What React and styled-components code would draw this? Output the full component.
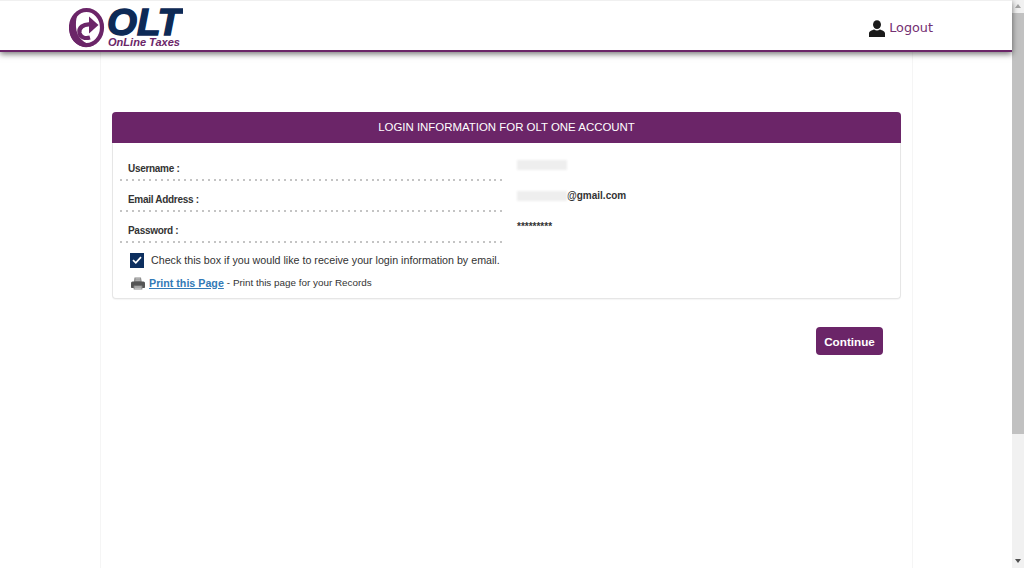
import React, { useState } from "react";
import styled, { createGlobalStyle } from "styled-components";

const PURPLE = "#6b2568";

const GlobalStyle = createGlobalStyle`
  html, body {
    margin: 0;
    height: 100%;
    overflow: hidden;
    background: #fff;
  }
  #root {
    height: 100%;
  }
`;

const Logo = () => (
  <LogoSvg width="114" height="48" viewBox="0 0 114 48">
    {/* ring, heavier on the lower left */}
    <ellipse cx="17.500" cy="25.500" rx="15.500" ry="17.500" fill="none" stroke={PURPLE} strokeWidth="4.200" />
    <path
      d="M6 13 C-2 22 -1 36 8 42 C13 46 20 46 25 43 C15 42.500 7.500 35 7 25 C6.800 20 7 16 9 12 Z"
      fill={PURPLE}
    />
    {/* curled arrow */}
    <path
      d="M22 22.500 C14 21.500 9.500 26 10.500 31 C11.500 35 15.500 37 21 35.500"
      fill="none"
      stroke={PURPLE}
      strokeWidth="4.200"
    />
    <path d="M29.500 23 L20 14.500 L20 31.500 Z" fill={PURPLE} />
    <text
      x="38"
      y="33"
      fontFamily="'Liberation Sans', Arial, sans-serif"
      fontSize="37"
      fontWeight="700"
      fontStyle="italic"
      fill="#0d2a56"
      stroke="#0d2a56"
      strokeWidth="1.400"
      textLength="74"
      lengthAdjust="spacingAndGlyphs"
    >
      OLT
    </text>
    <text
      x="39"
      y="44"
      fontFamily="'Liberation Sans', Arial, sans-serif"
      fontSize="10.500"
      fontWeight="700"
      fontStyle="italic"
      fill={PURPLE}
      textLength="72"
      lengthAdjust="spacingAndGlyphs"
    >
      OnLine Taxes
    </text>
  </LogoSvg>
);

const UserIcon = () => (
  <svg width="16" height="17" viewBox="0 0 16 17">
    <ellipse cx="8" cy="4.600" rx="4" ry="4.400" fill="#1a1a1a" />
    <path
      d="M0 17 V13.600 C0 11.400 2.600 10.400 5.200 9.600 C6.800 10.800 9.200 10.800 10.800 9.600 C13.400 10.400 16 11.400 16 13.600 V17 Z"
      fill="#1a1a1a"
    />
  </svg>
);

const PrinterIcon = () => (
  <svg width="14" height="13" viewBox="0 0 14 13">
    <path d="M3.500 0.500 H10 L10.800 5 H2.800 Z" fill="#8a8a8a" />
    <path d="M4.500 1.800 H9.200 M4.400 3.200 H9.400" stroke="#d8d8d8" strokeWidth="0.700" />
    <path
      d="M1.600 4.600 H12.400 C13.400 4.600 14 5.400 14 6.400 V10 C14 10.600 13.600 11 13 11 H1 C0.400 11 0 10.600 0 10 V6.400 C0 5.400 0.600 4.600 1.600 4.600 Z"
      fill="#555"
    />
    <rect x="2.600" y="8.600" width="8.800" height="4" rx="0.500" fill="#888" />
    <path d="M3.600 10 H10.400 M3.600 11.400 H10.400" stroke="#ddd" strokeWidth="0.700" />
  </svg>
);

const CheckMark = () => (
  <svg width="10" height="8" viewBox="0 0 10 8">
    <path
      d="M1 4.200 L3.800 6.800 L9 1.200"
      fill="none"
      stroke="#fff"
      strokeWidth="1.700"
    />
  </svg>
);

export default function App() {
  const [checked, setChecked] = useState(true);

  const rows = [
    { label: "Username :", value: <Redacted $width={50} /> },
    {
      label: "Email Address :",
      value: (
        <>
          <Redacted $width={50} />
          @gmail.com
        </>
      ),
    },
    { label: "Password :", value: "*********" },
  ];

  return (
    <Screen>
      <GlobalStyle />
      <Page>
        <Header>
          <Logo />
          <LogoutLink href="#">
            <UserIcon />
            Logout
          </LogoutLink>
        </Header>
        <Content>
          <Panel>
            <PanelTitle>LOGIN INFORMATION FOR OLT ONE ACCOUNT</PanelTitle>
            <PanelBody>
              <InfoGrid>
                {rows.map((row) => (
                  <React.Fragment key={row.label}>
                    <InfoLabel>{row.label}</InfoLabel>
                    <InfoValue>{row.value}</InfoValue>
                  </React.Fragment>
                ))}
              </InfoGrid>
              <CheckRow>
                <CheckBox
                  type="button"
                  onClick={() => setChecked(!checked)}
                  aria-label="Email login information"
                >
                  {checked && <CheckMark />}
                </CheckBox>
                Check this box if you would like to receive your login information by email.
              </CheckRow>
              <PrintRow>
                <PrinterIcon />
                <PrintLink href="#">Print this Page</PrintLink>
                <PrintNote>- Print this page for your Records</PrintNote>
              </PrintRow>
            </PanelBody>
          </Panel>
          <Actions>
            <ContinueButton>Continue</ContinueButton>
          </Actions>
        </Content>
      </Page>
      <Scrollbar>
        <ScrollArrow />
        <ScrollThumb />
        <ScrollArrow $down />
      </Scrollbar>
    </Screen>
  );
}

const Screen = styled.div`
  display: flex;
  height: 568px;
  width: 1024px;
  overflow: hidden;
  font-family: "Liberation Sans", Arial, sans-serif;
`;

const Page = styled.div`
  flex: 1;
  min-width: 0;
  display: flex;
  flex-direction: column;
`;

const Header = styled.header`
  position: relative;
  z-index: 1;
  box-sizing: border-box;
  height: 52px;
  display: flex;
  align-items: flex-start;
  justify-content: space-between;
  padding: 1px 79px 0 69px;
  background: #fff;
  border-top: 1px solid #f0f0f0;
  border-bottom: 2px solid ${PURPLE};
  box-shadow: 0 2px 6px rgba(0, 0, 0, 0.55);
`;

const LogoSvg = styled.svg`
  display: block;
`;

const LogoutLink = styled.a`
  display: flex;
  align-items: center;
  gap: 4px;
  margin-top: 16px;
  font-family: "DejaVu Sans", Verdana, sans-serif;
  font-size: 12.800px;
  line-height: 20px;
  color: #743072;
  text-decoration: none;
`;

const Content = styled.main`
  box-sizing: border-box;
  flex: 1;
  width: 813px;
  margin-left: 100px;
  padding: 60px 11px 0;
  border-left: 1px solid #f5f5f5;
  border-right: 1px solid #f5f5f5;
`;

const Panel = styled.section`
  box-sizing: border-box;
  height: 187px;
  border: 1px solid #e6e6e6;
  border-top: 0;
  border-radius: 4px;
  background: #fff;
  box-shadow: 0 1px 1px rgba(0, 0, 0, 0.04);
`;

const PanelTitle = styled.h2`
  margin: 0 -1px;
  height: 31px;
  border-radius: 4px 4px 0 0;
  background: ${PURPLE};
  color: #fff;
  font-size: 11.450px;
  font-weight: 400;
  line-height: 31px;
  text-align: center;
`;

const PanelBody = styled.div`
  padding: 7px 0 0 7px;
`;

const InfoGrid = styled.div`
  display: grid;
  grid-template-columns: 383px 1fr;
  column-gap: 14px;
  grid-auto-rows: 31px;
`;

const InfoLabel = styled.div`
  box-sizing: border-box;
  padding: 12px 0 0 8px;
  background: repeating-linear-gradient(90deg, #c4c4c4 0 2px, transparent 2px 5.850px) left bottom / 100% 2px no-repeat;
  font-size: 10px;
  font-weight: 700;
  letter-spacing: -0.3px;
  line-height: 14px;
  color: #333;
`;

const InfoValue = styled.div`
  display: flex;
  align-items: flex-start;
  padding-top: 8px;
  font-size: 10px;
  font-weight: 700;
  line-height: 14px;
  color: #333;
`;

const Redacted = styled.span`
  display: block;
  width: ${(p) => p.$width}px;
  height: 10px;
  margin-top: 2px;
  background: #eeeeee;
  filter: blur(1px);
`;

const CheckRow = styled.div`
  display: flex;
  align-items: center;
  gap: 7px;
  margin: 9px 0 0 10px;
  font-size: 10.700px;
  line-height: 16px;
  color: #333;
`;

const CheckBox = styled.button`
  display: flex;
  align-items: center;
  justify-content: center;
  width: 14px;
  height: 15px;
  padding: 0;
  border: 0;
  background: #0d2f5f;
  cursor: pointer;
`;

const PrintRow = styled.div`
  display: flex;
  align-items: center;
  gap: 4px;
  margin: 7px 0 0 11px;
  line-height: 16px;
`;

const PrintLink = styled.a`
  font-size: 10.700px;
  font-weight: 700;
  color: #337ab7;
`;

const PrintNote = styled.span`
  margin-left: -1px;
  font-size: 9.900px;
  color: #333;
`;

const Actions = styled.div`
  display: flex;
  justify-content: flex-end;
  padding: 28px 18px 0 0;
`;

const ContinueButton = styled.button`
  width: 67px;
  height: 28px;
  padding: 0;
  border: 0;
  border-radius: 4px;
  background: ${PURPLE};
  color: #fff;
  font-family: "Liberation Sans", Arial, sans-serif;
  font-size: 11.700px;
  font-weight: 700;
  cursor: pointer;
`;

const Scrollbar = styled.div`
  box-sizing: border-box;
  width: 12px;
  height: 100%;
  display: flex;
  flex-direction: column;
  align-items: stretch;
  background: #f1f1f1;
`;

const ScrollArrow = styled.div`
  flex: 0 0 13px;
  position: relative;
  &::after {
    content: "";
    position: absolute;
    left: 3px;
    top: 4px;
    border-left: 3px solid transparent;
    border-right: 3px solid transparent;
    ${(p) =>
      p.$down ? "border-top: 4px solid #505050;" : "border-bottom: 4px solid #a3a3a3;"}
  }
`;

const ScrollThumb = styled.div`
  flex: 0 0 421px;
  background: #c1c1c1;
  margin-bottom: auto;
`;
